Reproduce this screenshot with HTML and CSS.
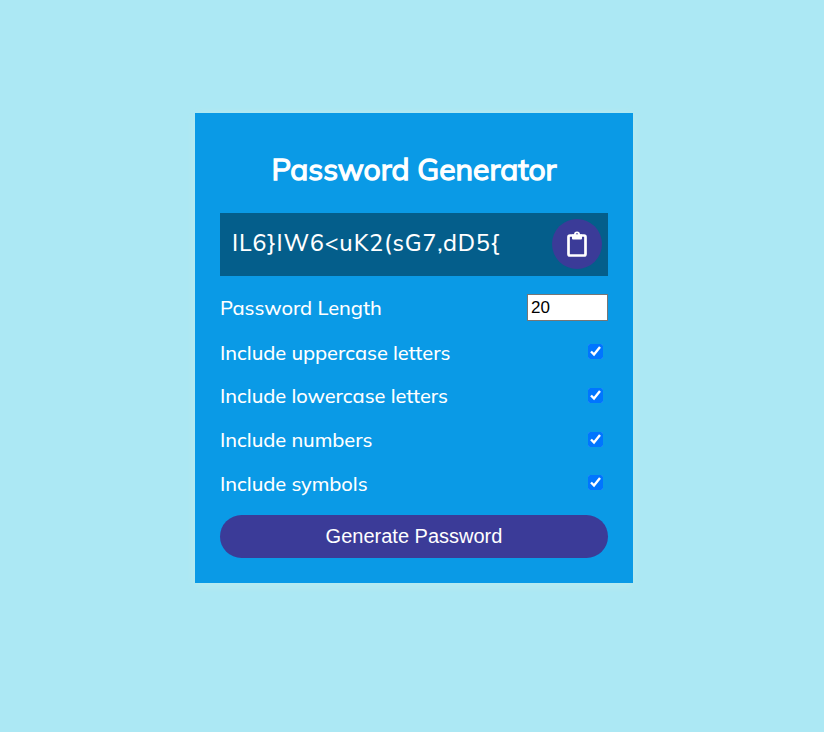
FILE: index.html
```html
<!DOCTYPE html>
<html lang="en">
<head>
<meta charset="utf-8">
<title>Password Generator</title>
<link rel="stylesheet" href="styles.css">
</head>
<body>
<main class="container">
  <h2 class="title">Password Generator</h2>
  <div class="result">
    <span class="result-text">IL6}IW6&lt;uK2(sG7,dD5{</span>
    <button class="copy" aria-label="Copy">
      <svg viewBox="0 0 20 26" width="20" height="26"><rect x="1.500" y="4.500" width="17" height="20" rx="1.500" fill="none" stroke="#fff" stroke-width="2.700"/><path fill="#fff" fill-rule="evenodd" d="M5 3.500h2a3 3 0 0 1 6 0h2v4a1 1 0 0 1-1 1H6a1 1 0 0 1-1-1zM10 2.300a1.200 1.200 0 1 0 0 2.400a1.200 1.200 0 0 0 0-2.400z"/></svg>
    </button>
  </div>
  <div class="setting"><label class="length-label" for="length">Password Length</label><input id="length" class="number" type="number" value="20"></div>
  <div class="setting"><label for="upper">Include uppercase letters</label><input id="upper" class="check" type="checkbox" checked></div>
  <div class="setting"><label for="lower">Include lowercase letters</label><input id="lower" class="check" type="checkbox" checked></div>
  <div class="setting"><label for="numbers">Include numbers</label><input id="numbers" class="check" type="checkbox" checked></div>
  <div class="setting"><label for="symbols">Include symbols</label><input id="symbols" class="check" type="checkbox" checked></div>
  <button class="generate">Generate Password</button>
</main>
</body>
</html>
```
FILE: styles.css
```css
* { box-sizing: border-box; }
body { display: flow-root; margin: 0; height: 732px; background: #ace8f4; color: #fff; font-family: Muli, Mulish, Lato, sans-serif; font-size: 20px; overflow: hidden; }
.container { display: flow-root; width: 438px; height: 470px; margin: 113px 0 0 195px; padding: 25px; background: #0a9ae6; box-shadow: 0 2px 10px rgba(255, 255, 220, .2); }
.title { margin: 11px 0 24px; height: 40px; line-height: 40px; font-size: 30px; font-weight: 400; -webkit-text-stroke: 1.3px #fff; text-align: center; }
.result { height: 63px; display: flex; align-items: center; justify-content: space-between; padding: 0 6px 1px 12px; background: #045e8b; margin-bottom: 10px; }
.result-text { font-size: 23px; font-weight: 500; letter-spacing: .9px; padding-bottom: 3px; }
.copy { width: 50px; height: 50px; padding: 0 0 1px; border: 0; border-radius: 50%; background: #3b3b98; display: grid; place-items: center; }
.setting { height: 43.8px; display: flex; align-items: center; justify-content: space-between; }
label { font-weight: 500; padding-top: 1px; letter-spacing: -.05px; }
.length-label { padding: 0 0 1px; }
.number { width: 81px; height: 27px; font: 17px "Liberation Sans", sans-serif; padding: 1px 3px; border: 1px solid #767676; color: #000; }
.check { width: 15px; height: 15px; margin: 0 5px .5px 0; }
.generate { width: 100%; height: 43px; margin-top: 10px; border: 0; border-radius: 22px; background: #3b3b98; color: #fff; font: 20px "Liberation Sans", sans-serif; }
```
